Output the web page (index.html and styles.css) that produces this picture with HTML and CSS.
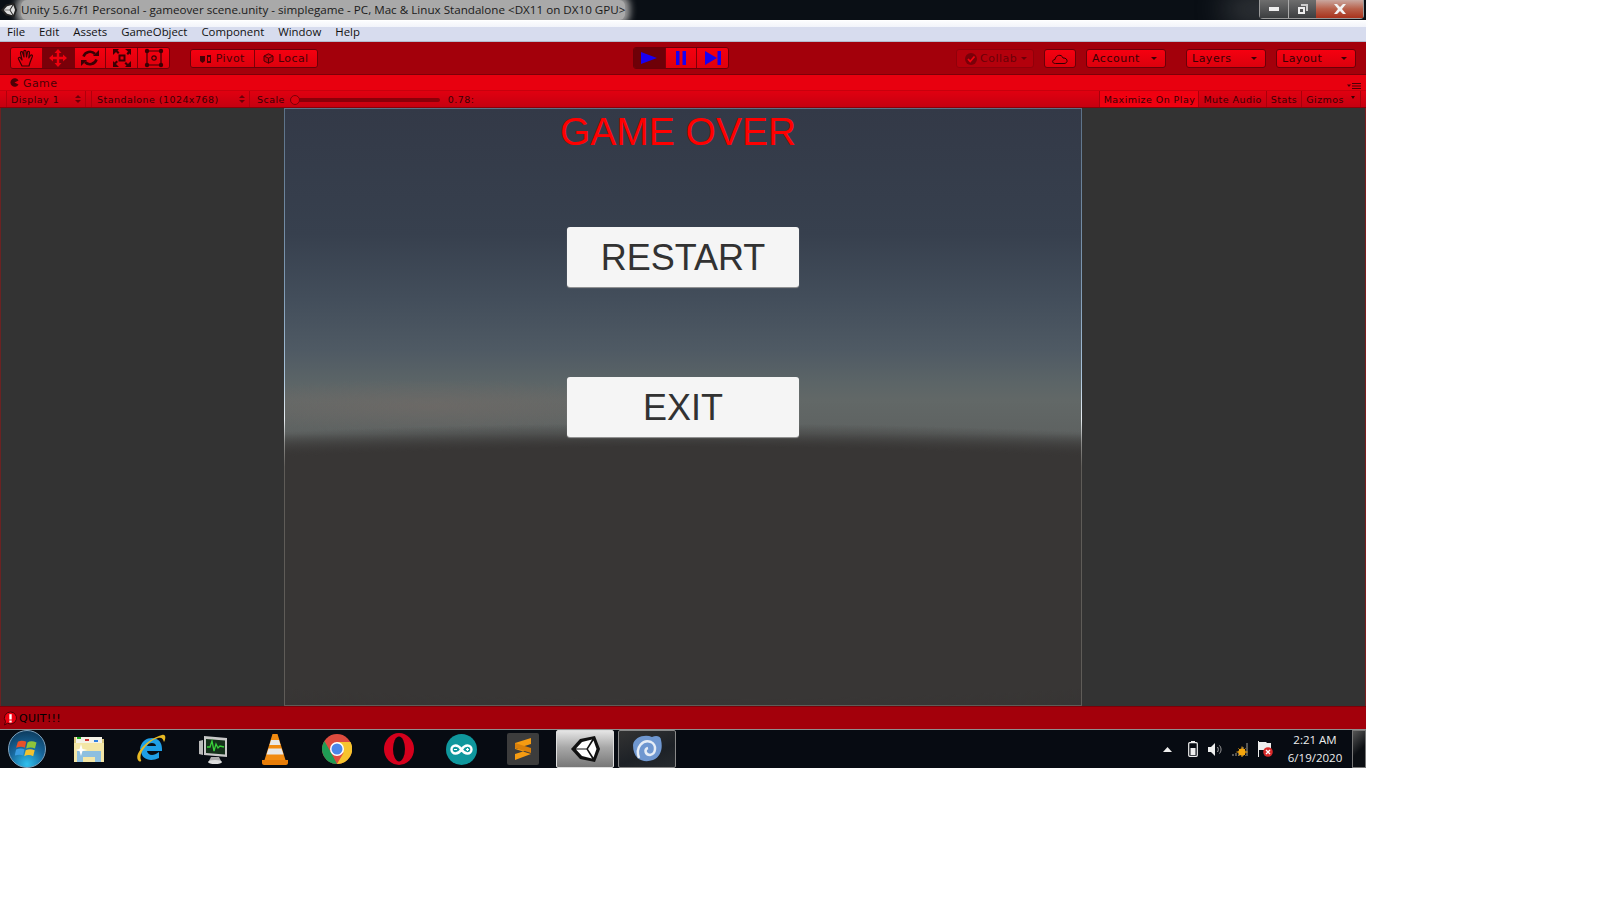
FILE: index.html
```html
<!DOCTYPE html>
<html lang="en">
<head>
    <meta charset="UTF-8">
    <title>Unity 5.6.7f1 Personal - gameover scene.unity</title>
    <link rel="stylesheet" href="styles.css">
</head>
<body>
    <div class="screen">
        <!-- window title bar -->
        <div class="titlebar">
            <svg class="unity-mini" width="16" height="16" viewBox="0 0 29 26"><path d="M0 13 9 3l15-3 5 13-5 13-15-3z" fill="#222"/><path d="M5 12.500l6-6.500 10-2.500-5.500 9zM5 13.500h10.500l5.500 9-10-2.500zM17 13l5.500-8.500 3 8.500-3 8.500z" fill="#ddd"/></svg>
            <span class="title-text">Unity 5.6.7f1 Personal - gameover scene.unity - simplegame - PC, Mac &amp; Linux Standalone &lt;DX11 on DX10 GPU&gt;</span>
            <div class="win-buttons">
                <div class="win-btn win-min"><svg width="12" height="6" viewBox="0 0 12 6"><rect x="1" y="1" width="10" height="4" fill="#eee"/></svg></div>
                <div class="win-btn win-max"><svg width="12" height="12" viewBox="0 0 12 12"><path d="M4 1h7v7H9V3H4z" fill="#ccc"/><path d="M1 4h7v7H1zM3 6v3h3V6z" fill="#eee" fill-rule="evenodd"/></svg></div>
                <div class="win-btn win-close"><svg width="14" height="10" viewBox="0 0 14 10"><path d="M1 0h3l3 3 3-3h3L9 5l4 5h-3L7 7l-3 3H1l4-5z" fill="#f2f2f2"/></svg></div>
            </div>
        </div>

        <nav class="menubar">
            <span>File</span><span>Edit</span><span>Assets</span><span>GameObject</span><span>Component</span><span>Window</span><span>Help</span>
        </nav>

        <!-- main unity toolbar -->
        <div class="toolbar">
            <div class="tb-left">
                <div class="btn-group tools">
                    <div class="tool"><svg width="20" height="20" viewBox="0 0 20 20" fill="none" stroke="#3a0004" stroke-width="1.200" stroke-linejoin="round" stroke-linecap="round"><path d="M6 18 2.500 11c-.7-1.500 1-2.300 2-1L6 12 4.500 5c-.3-1.500 1.700-2 2.100-.5L8 9 7.800 3.500c0-1.500 2-1.500 2.200 0L10.500 9l1-4.800c.3-1.400 2.200-1 2 .4L12.800 10l1.700-2.500c.8-1.200 2.500-.2 1.800 1.100L14 14.500 13 18z"/></svg></div>
                    <div class="tool active"><svg width="20" height="20" viewBox="0 0 20 20" fill="#f0000f"><path d="M10 1l3.500 4h-2.300v3.800H15V6.500l4 3.500-4 3.500v-2.300h-3.800V15h2.300L10 19l-3.500-4h2.300v-3.800H5v2.300L1 10l4-3.500v2.300h3.800V5H6.500z"/></svg></div>
                    <div class="tool"><svg width="20" height="20" viewBox="0 0 20 20" fill="none" stroke="#3a0004" stroke-width="2.600"><path d="M3.500 8.500A6.800 6.800 0 0 1 15 6"/><path d="M16.500 11.500A6.800 6.800 0 0 1 5 14"/><path d="M13 8h6V2z" fill="#3a0004" stroke="none"/><path d="M7 12H1v6z" fill="#3a0004" stroke="none"/></svg></div>
                    <div class="tool"><svg width="20" height="20" viewBox="0 0 20 20" fill="#3a0004"><path d="M6.500 6.500h7v7h-7zm2 2v3h3v-3z" fill-rule="evenodd"/><path d="M1 1h6L5.500 2.500l2 2L6 6 4 4 2.500 5.500 1 7zM19 1v6l-1.500-1.500L16 7l-1.500-1.500 1.500-2L13 1zM1 19v-6l1.500 1.500 2-2L6 14l-2 2 1.500 1.500L7 19zM19 19h-6l1.500-1.500-2-2L14 14l2 2 1.500-1.500L19 13z"/></svg></div>
                    <div class="tool"><svg width="20" height="20" viewBox="0 0 20 20" fill="#3a0004"><path d="M3 3h14v14H3z" fill="none" stroke="#3a0004" stroke-width="1.200"/><circle cx="3" cy="3" r="2.200"/><circle cx="17" cy="3" r="2.200"/><circle cx="3" cy="17" r="2.200"/><circle cx="17" cy="17" r="2.200"/><circle cx="10" cy="10" r="2.200" fill="none" stroke="#3a0004" stroke-width="1.200"/></svg></div>
                </div>
                <div class="btn-group pivot">
                    <div class="pivot-btn"><svg width="12" height="10" viewBox="0 0 12 10" fill="#4a0005"><path d="M0 2h5v5l-2.500 2L0 7zM7 1h4v8H7zM8 3v4h2V3z" fill-rule="evenodd"/></svg>Pivot</div>
                    <div class="pivot-btn"><svg width="11" height="11" viewBox="0 0 11 11" fill="#c0000c" stroke="#4a0005"><path d="M5.500.8 10 3v5L5.500 10.200 1 8V3zM1 3l4.500 2.200L10 3M5.500 5.200v5"/></svg>Local</div>
                </div>
            </div>
            <div class="btn-group play">
                <div class="play-btn active"><svg width="16" height="14" viewBox="0 0 16 14"><path d="M0 1l16 6-16 6z" fill="#1a00f0"/></svg></div>
                <div class="play-btn"><svg width="10" height="14" viewBox="0 0 10 14"><path d="M0 0h3.500v14H0zM6.500 0H10v14H6.500z" fill="#1a00f0"/></svg></div>
                <div class="play-btn"><svg width="16" height="14" viewBox="0 0 16 14"><path d="M0 0l12 7-12 7zM12.500 0H16v14h-3.500z" fill="#1a00f0"/></svg></div>
            </div>
            <div class="tb-right">
                <div class="tb-btn collab"><svg width="12" height="12" viewBox="0 0 12 12"><circle cx="6" cy="6" r="6" fill="#7a0009"/><path d="M3 6l2.200 2.500L9.500 3.500" fill="none" stroke="#f3000f" stroke-width="1.800"/></svg>Collab<i class="caret"></i></div>
                <div class="tb-btn cloud"><svg width="16" height="10" viewBox="0 0 16 10" fill="none" stroke="#2e0003"><path d="M3.500 9.500C-.5 9.500 0 5.500 3 5.500 3.500 1 9.500-.5 11 4c5-.5 5.500 5.500 1 5.500z"/></svg></div>
                <div class="tb-btn wide">Account<i class="caret"></i></div>
                <div class="tb-btn wide layers">Layers<i class="caret"></i></div>
                <div class="tb-btn wide">Layout<i class="caret"></i></div>
            </div>
        </div>

        <!-- game window tab + its toolbar -->
        <div class="tabbar">
            <svg width="9" height="9" viewBox="0 0 9 9"><path d="M8.500 2.500A4.300 4.300 0 1 0 8.500 6.500L4.500 4.500z" fill="#4d0006"/></svg>
            <span class="tab-label">Game</span>
            <div class="tab-menu"><svg width="14" height="6" viewBox="0 0 14 6" fill="#4d0006"><path d="M0 1.500h4L2 4zM5 0h9v1H5zM5 2.500h9v1H5zM5 5h9v1H5z"/></svg></div>
        </div>
        <div class="gamebar">
            <div class="gb-drop display">Display 1<i class="updown"></i></div>
            <div class="gb-drop aspect">Standalone (1024x768)<i class="updown"></i></div>
            <div class="scale">
                <span>Scale</span>
                <div class="slider"><i class="thumb"></i></div>
                <span>0.78:</span>
            </div>
            <div class="gb-right">
                <div class="gb-btn on">Maximize On Play</div>
                <div class="gb-btn">Mute Audio</div>
                <div class="gb-btn">Stats</div>
                <div class="gb-btn gizmos">Gizmos</div>
                <div class="gb-btn gizmo-arrow"><i class="caret small"></i></div>
            </div>
        </div>

        <div class="viewport">
            <div class="game-view">
                <h1 class="game-title">GAME OVER</h1>
                <button class="game-btn restart">RESTART</button>
                <button class="game-btn exit">EXIT</button>
            </div>
        </div>

        <div class="statusbar">
            <svg width="15" height="15" viewBox="0 0 15 15"><path d="M7.500 1a6 6 0 1 1-3 11.200L1.500 14l1-3.500A6 6 0 0 1 7.500 1z" fill="#ee0010" stroke="#4a0005"/><rect x="6.300" y="3.200" width="2.400" height="5.300" fill="#fff"/><rect x="6.300" y="9.500" width="2.400" height="2" fill="#fff"/></svg>
            <span>QUIT!!!</span>
        </div>

        <!-- windows taskbar -->
        <div class="taskbar">
            <div class="start-orb">
                <svg width="25" height="24" viewBox="0 0 20 20"><path d="M2 4c3-1.500 5-1 7 0l-1.200 5c-2-1-4-1.200-7.300 0z" fill="#e8502a"/><path d="M10 4.500c2-1.200 4.500-1.200 7.500 0l-1.300 5c-2.500-1-4.700-1-7.300 0z" fill="#8fc43a"/><path d="M.5 10.500c3-1.200 5-1 7 0L6.300 15.500c-2-1-4-1-7 0z" fill="#3a9be0"/><path d="M8.500 11c2.500-1 4.700-1 7.500 0l-1.300 5c-2.500-1.200-5-1.200-7.400 0z" fill="#f2c230"/></svg>
            </div>
            <div class="task-icon folder"><svg width="32" height="26" viewBox="0 0 32 26"><path d="M1 1h11l2 2h17v23H1z" fill="#d9c67c"/><path d="M3 1h26v6H3z" fill="#f4f2e6"/><rect x="4" y="1" width="4" height="2" fill="#20b020"/><rect x="12" y="3" width="4" height="2" fill="#d03030"/><rect x="21" y="4" width="4" height="2" fill="#3080e0"/><path d="M1 7h30v19H1z" fill="#f3e6a6"/><path d="M4 15h24v11h-6v-5H10v5H4z" fill="#8dbfdf"/><path d="M8 8l1.500 5 5 1-5 1L8 20l-1.500-5-4-1 4-1z" fill="#fff"/></svg></div>
            <div class="task-icon"><svg width="32" height="32" viewBox="0 0 32 32"><path d="M5 16C6 8 12 5 17 5c7 0 10 5 10 11v2H12c.5 4 6 6 12 1v6c-8 4-18 2-18-8z" fill="#1f9fe6"/><path d="M12 13h9c0-4-8-4-9 0z" fill="#06101a"/><path d="M3 27C-1 21 12 6 27 2c4-1 4 3 2 7-1-3-2-5-6-4C13 8 3 20 6 27c1 2-2 2-3 0z" fill="#e8b923"/></svg></div>
            <div class="task-icon"><svg width="32" height="32" viewBox="0 0 32 32"><path d="M2 8l4-1v15l-4-1z" fill="#bbb"/><path d="M7 3l23 2v19L7 22z" fill="#c8c8c8"/><path d="M9 6l19 1.500v14L9 20z" fill="#14301a"/><path d="M10 14l3 0 2-6 2 10 2-7 2 4 2-2 4 1" fill="none" stroke="#39d03a" stroke-width="1.300"/><path d="M14 24h8l2 4H12z" fill="#aaa"/><ellipse cx="18" cy="29" rx="7" ry="2" fill="#ddd"/></svg></div>
            <div class="task-icon"><svg width="28" height="32" viewBox="0 0 28 32"><path d="M11.500 1h5l8 26h-21z" fill="#f08a10"/><path d="M10 7h8l1.500 5h-11zM7.500 15.500h13l2 6h-17z" fill="#e8e8e8"/><path d="M1 27h26v3c0 1-1 2-2 2H3c-1 0-2-1-2-2z" fill="#e87d08"/></svg></div>
            <div class="task-icon"><svg width="30" height="30" viewBox="0 0 30 30"><circle cx="15" cy="15" r="15" fill="#dd4b3e"/><path d="M15 8h13.500A15 15 0 0 1 15 30l6.500-11z" fill="#f7c42e"/><path d="M15 30A15 15 0 0 1 2.400 7l6.600 11.500z" fill="#1f9c54"/><circle cx="15" cy="15" r="7" fill="#fff"/><circle cx="15" cy="15" r="5.500" fill="#4a86e8"/></svg></div>
            <div class="task-icon"><svg width="30" height="32" viewBox="0 0 30 32"><ellipse cx="15" cy="16" rx="15" ry="16" fill="#d5001c"/><ellipse cx="15" cy="16" rx="6" ry="12.500" fill="#06090f"/></svg></div>
            <div class="task-icon"><svg width="31" height="31" viewBox="0 0 31 31"><circle cx="15.500" cy="15.500" r="15.500" fill="#0f979d"/><path d="M15.500 15.500c-2-3-4-4-6-4a4 4 0 0 0 0 8c2 0 4-1 6-4zc2-3 4-4 6-4a4 4 0 0 1 0 8c-2 0-4-1-6-4z" fill="none" stroke="#fff" stroke-width="2.400"/><path d="M8 15.500h3M20 15.500h3M21.500 14v3" stroke="#fff" stroke-width="1.200"/></svg></div>
            <div class="task-icon sublime"><svg width="18" height="22" viewBox="0 0 18 22"><path d="M17 0v6L1 11V5zM1 11l16 5L1 22v-6l16-5z" fill="#f59b12"/><path d="M1 10l16 5v-5L1 5z" fill="#d97f0a"/></svg></div>
            <div class="task-app running">
                <svg width="29" height="26" viewBox="0 0 29 26"><path d="M0 13 9 3l15-3 5 13-5 13-15-3z" fill="#111"/><path d="M5 12.500l6-6.500 10-2.500-5.500 9zM5 13.500h10.500l5.500 9-10-2.500zM17 13l5.500-8.500 3 8.500-3 8.500z" fill="#fff"/></svg>
            </div>
            <div class="task-app">
                <svg width="32" height="28" viewBox="0 0 32 28"><path d="M2 10C3 2 14-1 21 2c4-2 9-1 9 3 2 8 0 17-8 20-8 3-20 1-20-15z" fill="#6f97d0"/><path d="M8 23C4 12 12 4 20 7c6 3 5 12-1 13-5 0-6-6-2-7" fill="none" stroke="#e6edf6" stroke-width="2.500"/></svg>
            </div>
            <div class="tray">
                <svg class="tray-arrow" width="9" height="5" viewBox="0 0 9 5"><path d="M0 5 4.500 0 9 5z" fill="#eee"/></svg>
                <svg class="tray-battery" width="10" height="16" viewBox="0 0 10 16"><rect x="3" y="0" width="4" height="2" fill="#eee"/><rect x=".7" y="1.700" width="8.600" height="13.600" rx="1" fill="none" stroke="#eee" stroke-width="1.200"/><rect x="2.500" y="7" width="5" height="7" fill="#eee"/></svg>
                <svg class="tray-sound" width="15" height="13" viewBox="0 0 15 13"><path d="M0 4h3l4-4v13L3 9H0z" fill="#eee"/><path d="M9.500 4c1 1.500 1 3.500 0 5M11.500 2.500c2 2.500 2 5.500 0 8" fill="none" stroke="#aaa"/></svg>
                <svg class="tray-net" width="17" height="15" viewBox="0 0 17 15"><path d="M0 12h2v2H0zM3 11h2v3H3zM6 9h2v5H6zM10 5h2v9h-2zM14 1h2v13h-2z" fill="#555"/><circle cx="10" cy="10" r="3.500" fill="#f6a60c"/><path d="M10 4.500v11M4.500 10h11M6.500 6.500l7 7M13.500 6.500l-7 7" stroke="#f6a60c"/></svg>
                <svg class="tray-flag" width="16" height="16" viewBox="0 0 16 16"><path d="M1 0h1v16H1z" fill="#eee"/><path d="M2 1h7l1 1h4v7H2z" fill="#eee"/><circle cx="11" cy="11" r="4.800" fill="#d92a2a"/><path d="M9 9l4 4M13 9l-4 4" stroke="#fff" stroke-width="1.400"/></svg>
            </div>
            <div class="clock"><div>2:21 AM</div><div>6/19/2020</div></div>
            <div class="show-desktop"></div>
        </div>
    </div>
</body>
</html>
```

FILE: styles.css
```css
* { box-sizing: border-box; }
html, body { margin: 0; padding: 0; background: #fff; }
body { font-family: "DejaVu Sans", sans-serif; height: 898px; overflow: hidden; }
.screen { width: 1366px; height: 768px; display: flex; flex-direction: column; }

/* title bar */
.titlebar { height: 20px; background: #0a0f15; display: flex; align-items: center; padding-left: 1px; }
.unity-mini { flex: none; margin-right: 4px; position: relative; z-index: 1; }
.title-text { font-family: "Open Sans", sans-serif; font-size: 11.650px; color: #1a1a1a; white-space: nowrap; background: #a9a9a9; height: 20px; line-height: 20px; box-shadow: 0 0 7px 5px #a0a0a0; border-radius: 6px; }
.win-buttons { margin-left: auto; margin-right: 2px; display: flex; height: 19px; align-self: flex-start; border: 1px solid #9a9a9a; border-top: 0; border-radius: 0 0 4px 4px; box-shadow: -30px 0 30px 4px rgba(150,150,150,.35); }
.win-btn { height: 100%; display: flex; align-items: center; justify-content: center; background: linear-gradient(#6e6e6e, #3c3e40); }
.win-min { width: 29px; border-right: 1px solid #aaa; }
.win-max { width: 27px; }
.win-close { width: 47px; background: linear-gradient(#c9a79f 0, #b8604a 50%, #a8321c 100%); }

.menubar { height: 22px; border-top: 1px solid #fff; border-bottom: 1px solid #b4b9cc; background: linear-gradient(#fcfdfe 0, #f2f4fa 30%, #d7dcee 31%, #d7dcee 100%); display: flex; align-items: center; padding-left: 7px; gap: 14px; font-family: "Open Sans", sans-serif; font-size: 11.400px; color: #111; }

/* toolbar */
.toolbar { height: 33px; background: #a3000b; display: flex; align-items: center; padding: 0 10px; border-bottom: 1px solid #7d0008; }
.tb-left { width: 623px; display: flex; align-items: center; gap: 20px; }
.btn-group { display: flex; border: 1px solid #6b0008; border-radius: 3px; overflow: hidden; }
.tools { height: 22px; width: 160px; }
.tool { flex: 1; display: flex; align-items: center; justify-content: center; background: linear-gradient(#f50010, #dc000d); border-right: 1px solid #7d0008; }
.tool:last-child { border-right: 0; }
.tool.active { background: #7a0009; }
.pivot { height: 19px; width: 128px; margin-top: 1px; }
.pivot-btn { flex: 1; display: flex; align-items: center; justify-content: center; gap: 4px; font-size: 11px; letter-spacing: .4px; color: #4a0005; background: linear-gradient(#f50010, #dc000d); border-right: 1px solid #7d0008; }
.pivot-btn:last-child { border-right: 0; }
.play { height: 22px; width: 96px; }
.play-btn { flex: 1; display: flex; align-items: center; justify-content: center; background: linear-gradient(#f50010, #e0000d); border-right: 1px solid #7d0008; }
.play-btn:last-child { border-right: 0; }
.play-btn.active { background: #6e0008; }
.tb-right { margin-left: auto; display: flex; align-items: center; gap: 10px; }
.tb-btn { height: 19px; margin-top: 1px; display: flex; align-items: center; border: 1px solid #6b0008; border-radius: 3px; background: linear-gradient(#f50010, #dc000d); font-size: 11px; letter-spacing: .5px; color: #3a0004; padding-left: 5px; position: relative; }
.tb-btn.wide { width: 80px; }
.tb-btn.layers { margin-left: 10px; }
.tb-btn.collab { width: 78px; gap: 3px; background: #b3000c; border-color: #90000a; color: #6b0008; padding-left: 8px; }
.tb-btn.cloud { width: 32px; justify-content: center; padding: 0; }
.caret { display: block; width: 0; height: 0; border-left: 3px solid transparent; border-right: 3px solid transparent; border-top: 3px solid #3a0004; }
.tb-btn .caret { position: absolute; right: 8px; top: 7px; }
.tb-btn.collab .caret { border-top-color: #6b0008; right: 6px; }

/* game tab */
.tabbar { height: 16px; background: #e8000f; display: flex; align-items: center; padding-left: 10px; gap: 4px; font-size: 11px; letter-spacing: .4px; color: #4d0006; border-bottom: 1px solid #c8000d; }
.tab-label { margin-top: 2px; }
.tab-menu { margin-left: auto; margin-right: 5px; margin-top: 6px; display: flex; }
.gamebar { height: 17px; background: linear-gradient(#e00010, #c60010); display: flex; align-items: center; font-size: 9.500px; letter-spacing: .45px; color: #3a0004; padding-left: 6px; border-bottom: 1px solid #8a0009; }
.gb-drop { height: 100%; display: flex; align-items: center; padding-left: 4px; position: relative; border-left: 1px solid #b0000c; border-right: 1px solid #b0000c; }
.display { width: 80px; }
.aspect { width: 159px; margin-left: 5px; padding-left: 5px; }
.updown { position: absolute; right: 4px; top: 4px; width: 6px; height: 8px; }
.updown::before, .updown::after { content: ""; position: absolute; left: 0; border-left: 3px solid transparent; border-right: 3px solid transparent; }
.updown::before { top: 0; border-bottom: 3px solid #6b0008; }
.updown::after { bottom: 0; border-top: 3px solid #6b0008; }
.scale { display: flex; align-items: center; margin-left: 7px; }
.slider { width: 150px; height: 4px; margin: 1px 8px 0 5px; background: #8a0009; border-radius: 2px; position: relative; }
.thumb { position: absolute; left: 0; top: -3px; width: 10px; height: 10px; border-radius: 50%; background: #dc000e; border: 1px solid #7a0009; }
.gb-right { margin-left: auto; margin-right: 5px; display: flex; height: 100%; }
.gb-btn { display: flex; align-items: center; padding: 0 4px; border-right: 1px solid #a8000b; }
.gb-btn.on { background: #f00010; border-left: 1px solid #a8000b; width: 100px; justify-content: center; padding: 0; }
.gb-btn.gizmos { border-right: 0; padding-right: 3px; }
.gizmo-arrow { width: 14px; padding: 0 4px; }
.caret.small { border-left-width: 2px; border-right-width: 2px; margin-bottom: 3px; }

/* game view */
.viewport { flex: 1; background: #333; display: flex; justify-content: center; border-left: 1px solid #6b2222; border-right: 1px solid #7a1e1e; }
.game-view { width: 798px; border: 1px solid #77838f; border-image: linear-gradient(#5b7086 0, #7f9ab4 30%, #a9c4dc 45%, #e8eef2 52%, #8a8a88 56%, #5f5c58 60%, #5f5c58 100%) 1; display: flex; flex-direction: column; align-items: center;
    background:
        radial-gradient(ellipse 1200px 150px at 50% 464px, #383635 0, #383635 84%, rgba(56, 54, 53, 0) 100%),
        radial-gradient(ellipse 260px 26px at 18% 297px, rgba(114, 106, 102, .6), rgba(114, 106, 102, 0)),
        linear-gradient(#333947 0, #37404e 21%, #434e5b 32%, #4f5a64 40.500%, #5c6567 46%, #626867 49%, #5e6261 54.500%, #383635 58.500%, #363433 100%); }
.game-title { margin: 0 0 0 -10px; font-family: "Liberation Sans", sans-serif; font-weight: 400; font-size: 39px; line-height: 46px; color: #f00; }
.game-btn { width: 232px; height: 60px; border: 0; border-radius: 3px; background: #f5f5f5; box-shadow: 0 1px 1px #999; font-family: "Liberation Sans", sans-serif; font-size: 36px; color: #323232; padding: 2px 0 0; }
.restart { margin-top: 72px; }
.exit { margin-top: 90px; }

.statusbar { height: 23px; background: #a3000b; border-top: 1px solid #7d0008; display: flex; align-items: center; padding-left: 3px; gap: 1px; font-size: 11px; letter-spacing: .3px; color: #000; }

/* taskbar */
.taskbar { height: 39px; border-top: 1px solid #8e8e8e; background: #070b12; display: flex; align-items: center; }
.start-orb { flex: none; width: 38px; height: 38px; margin-left: 8px; border-radius: 50%; display: flex; align-items: center; justify-content: center; background: radial-gradient(circle at 50% 92%, #2fc0ee 0, #17659a 48%, #0e3f63 85%); border: 1px solid #7fa4c0; }
.task-icon { flex: none; width: 62px; height: 38px; display: flex; align-items: center; justify-content: center; }
.folder { margin-left: 12px; }
.task-icon.sublime svg { background: #3c3c3c; width: 32px; height: 32px; padding: 5px 7px; border-radius: 2px; }
.task-app { flex: none; width: 58px; height: 38px; margin-right: 4px; display: flex; align-items: center; justify-content: center; border: 1px solid #888; border-radius: 2px; background: linear-gradient(160deg, #333 0, #1d2126 60%, #262a2e 100%); }
.task-app.running { margin-left: 2px; background: linear-gradient(#e4e4e4 0, #a8a8a8 45%, #777 100%); border-color: #ddd; }
.tray { margin-left: auto; display: flex; align-items: center; }
.tray-arrow { margin-right: 16px; }
.tray-battery { margin-right: 10px; }
.tray-sound { margin-right: 9px; }
.tray-net { margin-right: 8px; }
.tray-flag { margin-right: 11px; }
.clock { width: 62px; margin-right: 6px; text-align: center; font-family: "Open Sans", sans-serif; font-size: 11.500px; line-height: 18px; color: #eee; }
.show-desktop { width: 14px; height: 38px; border: 1px solid #777; background: linear-gradient(135deg, #555, #0c0f13 55%); }
```
